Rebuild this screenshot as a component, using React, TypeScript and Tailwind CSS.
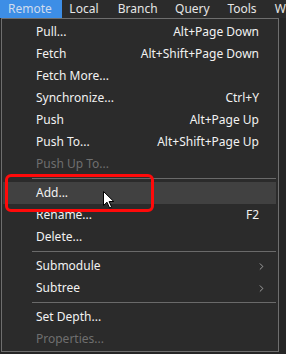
import { ChevronRight } from 'lucide-react'

type Item =
  | { kind: 'item'; label: string; shortcut?: string; disabled?: boolean; active?: boolean; sub?: boolean }
  | { kind: 'sep' }

const items: Item[] = [
  { kind: 'item', label: 'Pull...',        shortcut: 'Alt+Page Down' },
  { kind: 'item', label: 'Fetch',          shortcut: 'Alt+Shift+Page Down' },
  { kind: 'item', label: 'Fetch More...' },
  { kind: 'item', label: 'Synchronize...', shortcut: 'Ctrl+Y' },
  { kind: 'item', label: 'Push',           shortcut: 'Alt+Page Up' },
  { kind: 'item', label: 'Push To...',     shortcut: 'Alt+Shift+Page Up' },
  { kind: 'item', label: 'Push Up To...',  disabled: true },
  { kind: 'sep' },
  { kind: 'item', label: 'Add...',         active: true },
  { kind: 'item', label: 'Rename...',      shortcut: 'F2' },
  { kind: 'item', label: 'Delete...' },
  { kind: 'sep' },
  { kind: 'item', label: 'Submodule',      sub: true },
  { kind: 'item', label: 'Subtree',        sub: true },
  { kind: 'sep' },
  { kind: 'item', label: 'Set Depth...' },
  { kind: 'item', label: 'Properties...',  disabled: true },
]

export default function App() {
  return (
    <div className="relative w-[286px] h-[354px] overflow-hidden bg-[#262626] text-[12px] leading-none"
         style={{ fontFamily: '"Noto Sans", "Open Sans", sans-serif' }}>
      {/* Menu bar */}
      <div className="flex h-[18px] bg-[#2b2b2b] text-[#e6e6e6]">
        <div className="flex items-center h-full w-[63px] pl-[8px] bg-[#3d8ee6] text-[#cfdcee]">Remote</div>
        <div className="flex items-center h-full w-[56px] pl-[7px]">Local</div>
        <div className="flex items-center h-full w-[58px]">Branch</div>
        <div className="flex items-center h-full w-[53px]">Query</div>
        <div className="flex items-center h-full w-[48px]">Tools</div>
        <div className="flex items-center h-full">W</div>
      </div>

      {/* Dropdown */}
      <div className="ml-[1px] w-[278px] border border-[#6e6e6e] bg-[#2b2b2b] pt-[2px] pb-[1px] pl-[1px] pr-[1px]">
        {items.map((it, i) => {
          if (it.kind === 'sep') return (
            <div key={i} className="h-[7px] flex items-center">
              <div className="ml-[29px] mr-[1px] h-px flex-1 bg-[#6a6a6a]" />
            </div>
          )
          return (
            <div key={i}
                 className={`h-[22px] mr-[1px] flex items-center pl-[33px] pr-[17px] ${it.active ? 'bg-[#414141]' : ''} ${it.disabled ? 'text-[#6f6f6f]' : 'text-[#f2f2f2]'}`}>
              <span className="flex-1">{it.label}</span>
              {it.shortcut && <span>{it.shortcut}</span>}
              {it.sub && <ChevronRight size={11} strokeWidth={1.5} className="mr-[-8px] text-[#cfcfcf]" />}
            </div>
          )
        })}
      </div>

      {/* Highlight annotation */}
      <div className="absolute left-[5px] top-[174px] w-[149px] h-[38px] border-[3px] border-[#ff0a0a] rounded-[6px]" />

      {/* Mouse cursor */}
      <svg className="absolute left-[103px] top-[191px]" width="12" height="18" viewBox="0 0 12 18">
        <path d="M0.5 0.5 L0.5 14.5 L4 11.2 L6.6 17 L8.6 16.1 L6.1 10.5 L10.8 10.5 Z"
              fill="#ffffff" stroke="#000000" strokeWidth="1" strokeLinejoin="round" />
      </svg>
    </div>
  )
}
